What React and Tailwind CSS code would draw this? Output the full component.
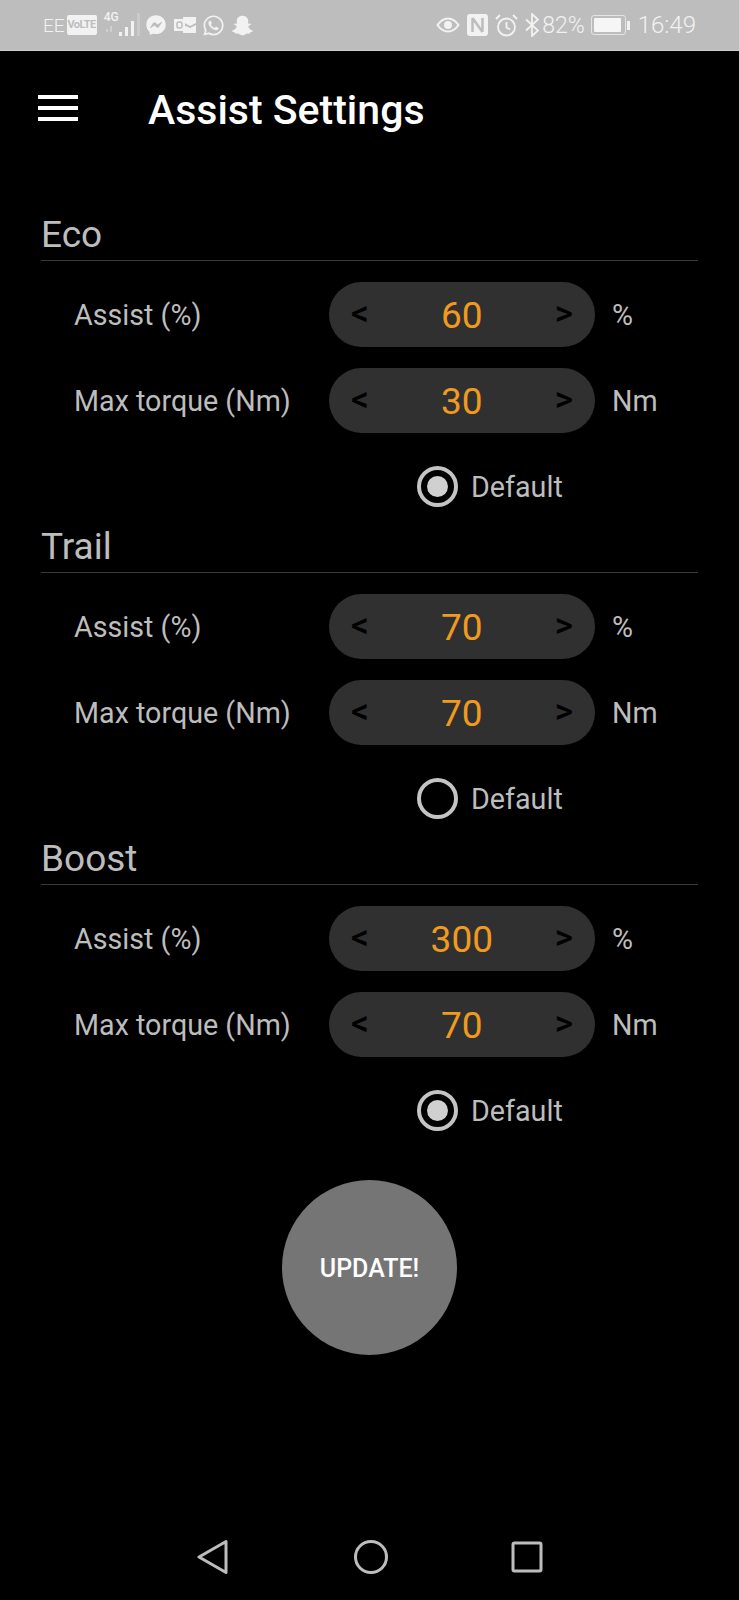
import React from "react";
import { FaFacebookMessenger, FaWhatsapp, FaSnapchatGhost } from "react-icons/fa";

const font = { fontFamily: "Roboto, sans-serif" };

function Outlook() {
  return (
    <svg width="22" height="18" viewBox="0 0 22 18" fill="none" className="ml-[8px]">
      <rect x="0" y="3" width="11" height="12" fill="#f2f2f2" />
      <rect x="3" y="6" width="5" height="6" rx="2" stroke="#bdbdbd" strokeWidth="1.500" />
      <path d="M9 1h13v6l-6 3-7-4z" fill="#f2f2f2" />
      <path d="M12 10l4 2 6-3v8H9v-5z" fill="#f2f2f2" />
    </svg>
  );
}

function Signal() {
  return (
    <div className="relative ml-[7px] h-[28px] w-[36px]">
      <span className="absolute left-0 top-[-1px] text-[12px] leading-[14px] font-medium text-[#f2f2f2]">4G</span>
      <svg width="36" height="28" viewBox="0 0 36 28" className="absolute left-0 top-0">
        <rect x="2" y="18" width="2" height="3" fill="#d0d0d0" />
        <rect x="6" y="15" width="2" height="6" fill="#d0d0d0" />
        <rect x="15" y="21" width="3" height="4" fill="#f2f2f2" />
        <rect x="21" y="16" width="3" height="9" fill="#f2f2f2" />
        <rect x="27" y="10" width="3" height="15" fill="#f2f2f2" />
        <rect x="33" y="2" width="3" height="23" fill="#cacaca" />
      </svg>
    </div>
  );
}

function StatusBar() {
  return (
    <div className="flex h-[51px] items-center justify-between border-b border-[#cdcdcd] bg-[#bdbdbd] pl-[43px] pr-[43px] text-[#f2f2f2]">
      <div className="flex items-center">
        <span className="text-[19px] leading-none font-light">EE</span>
        <span className="ml-[2px] flex h-[20px] w-[30px] items-center justify-center rounded-[2px] bg-[#f2f2f2] text-[11px] font-bold tracking-[-0.5px] text-[#bdbdbd]">VoLTE</span>
        <Signal />
        <FaFacebookMessenger className="ml-[6px] size-[20px]" />
        <Outlook />
        <FaWhatsapp className="ml-[6px] size-[23px]" />
        <FaSnapchatGhost className="ml-[7px] size-[21px]" />
      </div>
      <div className="flex items-center">
        <svg width="24" height="16" viewBox="0 0 24 16" fill="none">
          <path d="M1.500 8C5 3 8.500 1.500 12 1.500S19 3 22.500 8C19 13 15.500 14.500 12 14.500S5 13 1.500 8z" stroke="#f2f2f2" strokeWidth="2" />
          <circle cx="12" cy="8" r="4" fill="#f2f2f2" />
        </svg>
        <svg width="21" height="22" viewBox="0 0 21 22" className="ml-[7px]">
          <rect x="0" y="0" width="21" height="22" rx="3" fill="#f2f2f2" />
          <path d="M5.500 4v14M5.500 4l10 14M15.500 4v14" stroke="#bdbdbd" strokeWidth="2.500" fill="none" />
        </svg>
        <svg width="23" height="23" viewBox="0 0 23 23" fill="none" stroke="#f2f2f2" className="ml-[7px]">
          <circle cx="11.500" cy="13" r="8.500" strokeWidth="1.800" />
          <path d="M11.500 8v5.500l3.500 2" strokeWidth="1.800" />
          <path d="M1 5l4-4M22 5l-4-4" strokeWidth="2" />
        </svg>
        <svg width="14" height="24" viewBox="0 0 14 24" fill="none" stroke="#f2f2f2" strokeWidth="1.800" className="ml-[7px]">
          <path d="M1 6.500l12 11-6 5.500V1l6 5.500-12 11" />
        </svg>
        <span className="ml-[3px] text-[23px] leading-none font-light">82%</span>
        <div className="ml-[6px] flex items-center">
          <div className="flex h-[20px] w-[35px] items-center rounded-[3px] border border-[#e4e4e4] p-[2px]">
            <div className="h-full w-[27px] rounded-[1px] bg-[#f6f6f6]" />
          </div>
          <div className="ml-[1px] h-[9px] w-[3px] bg-[#f2f2f2]" />
        </div>
        <span className="ml-[8px] text-[24px] leading-none font-light">16:49</span>
      </div>
    </div>
  );
}

function Header() {
  return (
    <div className="flex h-[114px] items-center pl-[38px]">
      <div className="flex w-[40px] flex-col gap-[7px]">
        <div className="h-[4px] bg-white" />
        <div className="h-[4px] bg-white" />
        <div className="h-[4px] bg-white" />
      </div>
      <h1 className="ml-[70px] pt-[5px] text-[41px] leading-none font-medium text-white">Assist Settings</h1>
    </div>
  );
}

function Row({ label, value, unit }) {
  return (
    <div className="flex h-[65px] items-center">
      <span className="w-[288px] pl-[33px] pt-[2px] text-[28.7px] leading-none text-[#bdbdbd]">{label}</span>
      <div className="flex h-[65px] w-[266px] items-center justify-between rounded-full bg-[#303030] px-[22px]">
        <span className="pb-[3px] text-[35px] leading-none font-medium text-black">&lt;</span>
        <span className="pt-[2px] text-[37px] leading-none text-[#f09a1f]">{value}</span>
        <span className="pb-[3px] text-[35px] leading-none font-medium text-black">&gt;</span>
      </div>
      <span className="ml-[17px] pt-[2px] text-[28.7px] leading-none text-[#bdbdbd]">{unit}</span>
    </div>
  );
}

function Section({ title, assist, torque, selected }) {
  return (
    <section className="h-[312px] pl-[41px]">
      <div className="mr-[41px] flex h-[56px] items-end border-b border-[#3a3a3a] pb-[7px]">
        <h2 className="text-[37px] leading-none text-[#bdbdbd]">{title}</h2>
      </div>
      <div className="mt-[21px] flex flex-col gap-[21px]">
        <Row label="Assist (%)" value={assist} unit="%" />
        <Row label="Max torque (Nm)" value={torque} unit="Nm" />
      </div>
      <div className="mt-[33px] flex h-[41px] items-center pl-[376px]">
        <div className="flex size-[41px] items-center justify-center rounded-full border-[4px] border-[#c4c4c4]">
          {selected && <div className="size-[21px] rounded-full bg-[#d0d0d0]" />}
        </div>
        <span className="ml-[13px] pt-[2px] text-[28.7px] leading-none text-[#bdbdbd]">Default</span>
      </div>
    </section>
  );
}

function NavBar() {
  return (
    <div className="flex items-center justify-center pt-[184px]">
      <svg width="32" height="36" viewBox="0 0 32 36" fill="none" stroke="#bdbdbd" strokeWidth="3" strokeLinejoin="round">
        <path d="M29 2.500v31L2 18z" />
      </svg>
      <svg width="36" height="36" viewBox="0 0 36 36" fill="none" stroke="#bdbdbd" strokeWidth="3" className="ml-[124px]">
        <circle cx="18" cy="18" r="15.500" />
      </svg>
      <svg width="32" height="32" viewBox="0 0 32 32" fill="none" stroke="#bdbdbd" strokeWidth="3" className="ml-[122px]">
        <rect x="2" y="2" width="28" height="28" rx="1.500" />
      </svg>
    </div>
  );
}

export default function App() {
  return (
    <div className="h-[1600px] w-[739px] overflow-hidden bg-black" style={font}>
      <StatusBar />
      <Header />
      <div className="pt-[40px]">
        <Section title="Eco" assist="60" torque="30" selected />
        <Section title="Trail" assist="70" torque="70" />
        <Section title="Boost" assist="300" torque="70" selected />
      </div>
      <div className="mt-[39px] flex justify-center">
        <button className="flex size-[175px] items-center justify-center rounded-full bg-[#757575] pt-[3px] text-[25px] font-medium text-white">UPDATE!</button>
      </div>
      <NavBar />
    </div>
  );
}
